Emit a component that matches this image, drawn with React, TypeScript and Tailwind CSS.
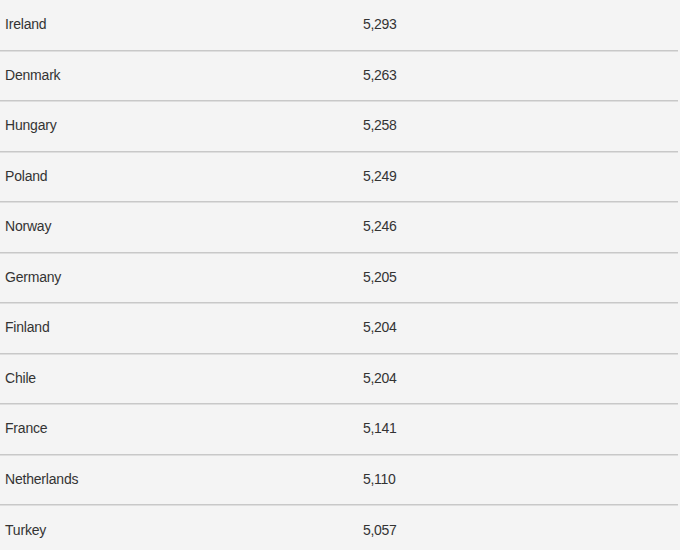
const rows: [string, string][] = [
  ["Ireland", "5,293"],
  ["Denmark", "5,263"],
  ["Hungary", "5,258"],
  ["Poland", "5,249"],
  ["Norway", "5,246"],
  ["Germany", "5,205"],
  ["Finland", "5,204"],
  ["Chile", "5,204"],
  ["France", "5,141"],
  ["Netherlands", "5,110"],
  ["Turkey", "5,057"],
];

export default function App() {
  return (
    <div
      className="w-[680px] h-[550px] overflow-hidden bg-[#f4f4f4] text-[#333] text-[14px]"
      style={{ fontFamily: '"Liberation Sans", Arial, sans-serif' }}
    >
      <div className="w-[678px]">
        {rows.map(([country, value], i) => (
          <div
            key={country}
            className={
              i === rows.length - 1
                ? "flex items-center h-[50.5px]"
                : "flex items-center h-[50.5px] border-b border-[#c8c8c8] shadow-[0_1px_0_#dedede]"
            }
          >
            <div className="w-[363px] pl-[5px] tracking-[-0.2px]">{country}</div>
            <div className="tracking-[-0.3px]">{value}</div>
          </div>
        ))}
      </div>
    </div>
  );
}
